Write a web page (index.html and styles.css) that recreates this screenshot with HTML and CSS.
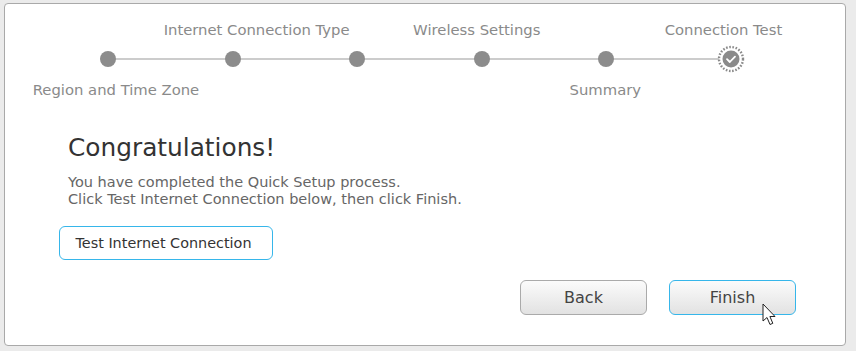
FILE: index.html
```html
<!DOCTYPE html>
<html>
<head>
<meta charset="utf-8">
<link rel="stylesheet" href="styles.css">
</head>
<body>
<div class="panel">
  <div class="steps">
    <div class="step"><div class="lbl"></div><div class="dotrow"><span class="dot"></span></div><div class="lbl lbl-region">Region and Time Zone</div></div>
    <div class="step"><div class="lbl lbl-internet">Internet Connection Type</div><div class="dotrow"><span class="dot"></span></div><div class="lbl"></div></div>
    <div class="step"><div class="lbl"></div><div class="dotrow"><span class="dot"></span></div><div class="lbl"></div></div>
    <div class="step"><div class="lbl lbl-wireless">Wireless Settings</div><div class="dotrow"><span class="dot"></span></div><div class="lbl"></div></div>
    <div class="step"><div class="lbl"></div><div class="dotrow"><span class="dot"></span></div><div class="lbl lbl-summary">Summary</div></div>
    <div class="step"><div class="lbl lbl-test">Connection Test</div><div class="dotrow">
      <svg class="cur" width="28" height="28" viewBox="0 0 28 28">
        <circle cx="14" cy="14" r="12" fill="#fff" stroke="#8a8a8a" stroke-width="2.4" stroke-dasharray="1.6 1.6"/>
        <circle cx="14" cy="14" r="8.5" fill="#8a8a8a"/>
        <path d="M10 14.2 L12.8 17 L18 11.6" fill="none" stroke="#fff" stroke-width="1.8" stroke-linecap="round" stroke-linejoin="round"/>
      </svg>
    </div><div class="lbl"></div></div>
  </div>
  <div class="content">
    <h1 class="title">Congratulations!</h1>
    <p class="msg">You have completed the Quick Setup process.<br>Click Test Internet Connection below, then click Finish.</p>
    <button class="btn-test">Test Internet Connection</button>
  </div>
  <div class="actions">
    <button class="btn">Back</button>
    <button class="btn btn-primary">Finish</button>
  </div>
  <svg class="pointer" width="18" height="26" viewBox="0 0 18 26">
    <path d="M1 1 L1 18 L5 14.5 L8 21.5 L10.8 20.3 L7.9 13.5 L13 13.5 Z" fill="#fff" stroke="#222" stroke-width="1" stroke-linejoin="round"/>
  </svg>
</div>
</body>
</html>
```

FILE: styles.css
```css
html, body {
  margin: 0;
  padding: 0;
  background: #ebebeb;
  font-family: "DejaVu Sans", Verdana, sans-serif;
}
.panel {
  position: relative;
  margin: 3px 10px 0 4px;
  width: 840px;
  height: 341px;
  background: #fff;
  border: 1px solid #a9a9a9;
  border-radius: 4px;
  box-sizing: content-box;
}
.steps {
  position: relative;
  display: grid;
  grid-template-columns: repeat(6, 124.6px);
  padding: 16px 0 0 40.7px;
}
.steps::before {
  content: "";
  position: absolute;
  left: 103px;
  width: 623px;
  top: 54px;
  height: 2px;
  background: #cccccc;
}
.step {
  display: flex;
  flex-direction: column;
  align-items: center;
}
.lbl {
  height: 20px;
  line-height: 20px;
  font-size: 14.8px;
  color: #8a8a8a;
  white-space: nowrap;
}
.step .lbl:last-child {
  height: 24px;
  line-height: 24px;
}
.lbl-region { margin-left: 16px; }
.lbl-internet { margin-left: 48px; }
.lbl-wireless { margin-right: 10px; }
.lbl-summary { margin-right: 2px; }
.lbl-test { margin-right: 15px; }
.dotrow {
  height: 38px;
  display: flex;
  align-items: center;
  justify-content: center;
  position: relative;
}
.dot {
  width: 16px;
  height: 16px;
  border-radius: 50%;
  background: #8c8c8c;
}
.cur { display: block; position: relative; z-index: 1; }
.content {
  padding: 31px 0 0 63px;
}
.title {
  margin: 0;
  font-size: 24.8px;
  font-weight: normal;
  color: #333;
  line-height: 30px;
}
.msg {
  margin: 11px 0 0 0;
  font-size: 14.5px;
  line-height: 17px;
  color: #666;
}
.btn-test {
  margin: 18px 0 0 -9px;
  width: 214px;
  height: 34px;
  background: #fff;
  border: 1px solid #36b6ea;
  border-radius: 6px;
  font-family: inherit;
  font-size: 14.4px;
  color: #333;
  padding: 0 5px 0 0;
}
.actions {
  display: flex;
  justify-content: flex-end;
  gap: 22px;
  padding: 20px 49px 0 0;
}
.btn {
  width: 127px;
  height: 35px;
  border: 1px solid #aaa;
  border-radius: 6px;
  background: linear-gradient(#fbfbfb, #e2e2e2);
  font-family: inherit;
  font-size: 16px;
  color: #444;
  padding: 0;
}
.btn-primary {
  border-color: #36b6ea;
}
.pointer {
  position: absolute;
  left: 757px;
  top: 299px;
}
```
